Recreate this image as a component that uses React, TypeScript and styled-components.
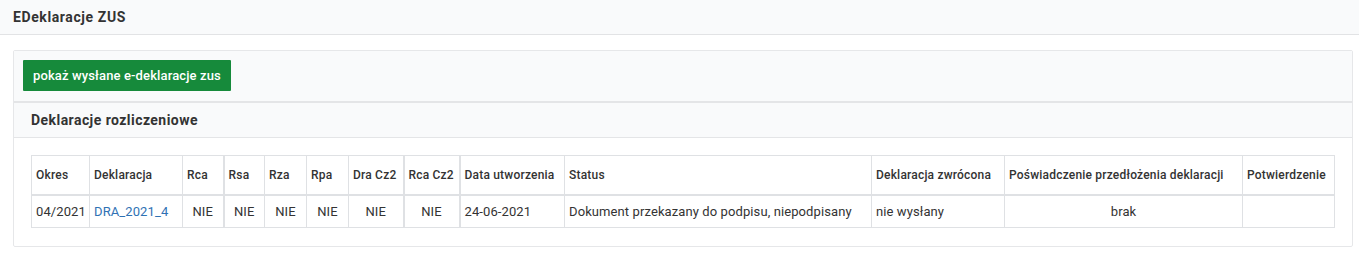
import React from "react";
import styled, { createGlobalStyle } from "styled-components";

const GlobalStyle = createGlobalStyle`
  body {
    margin: 0;
    background: #ffffff;
    font-family: Roboto, "Liberation Sans", Arial, sans-serif;
    color: #333333;
  }
`;

const TopBar = styled.div`
  height: 34px;
  display: flex;
  align-items: center;
  padding: 0 13px;
  background: #f9fafb;
  border-bottom: 1px solid #e2e3e5;
`;

const PageTitle = styled.h1`
  margin: 0;
  font-size: 14px;
  font-weight: 700;
  letter-spacing: 0.6px;
  color: #333333;
`;

const Panel = styled.div`
  margin: 15px 6px 0 13px;
  border: 1px solid #e6e7e9;
  border-radius: 2px;
`;

const Toolbar = styled.div`
  display: flex;
  align-items: center;
  padding: 9px 9px 10px 9px;
  background: #f9fafb;
  border-bottom: 1px solid #e4e5e7;
`;

const GreenButton = styled.button`
  height: 31px;
  padding: 0 10px;
  border: none;
  border-radius: 1px;
  background: #168a3b;
  color: #ffffff;
  font-family: Roboto, "Liberation Sans", Arial, sans-serif;
  font-size: 13px;
  font-weight: 500;
  letter-spacing: 0.13px;
  cursor: pointer;
`;

const SectionHeader = styled.div`
  height: 34px;
  display: flex;
  align-items: center;
  padding: 0 17px;
  background: #f9fafb;
  border-top: 1px solid #e4e5e7;
  border-bottom: 1px solid #e4e5e7;
`;

const SectionTitle = styled.h2`
  margin: 0;
  font-size: 14px;
  font-weight: 700;
  letter-spacing: 0.45px;
  color: #333333;
`;

const SectionBody = styled.div`
  padding: 17px 18px 18px 17px;
`;

const Table = styled.table`
  width: 1303px;
  border-collapse: collapse;
  table-layout: fixed;
  font-size: 12px;
`;

const HeadCell = styled.th<{ $thick?: boolean }>`
  height: 38px;
  padding: 0 4px;
  text-align: left;
  font-weight: 500;
  letter-spacing: 0.2px;
  color: #333333;
  white-space: nowrap;
  border: 1px solid #dfe1e4;
  border-left-width: ${(p) => (p.$thick ? "2px" : "1px")};
  border-bottom: 2px solid #dfe1e4;
`;

const Cell = styled.td<{ $center?: boolean; $thick?: boolean }>`
  height: 31px;
  padding: 0 4px;
  text-align: ${(p) => (p.$center ? "center" : "left")};
  color: #333333;
  white-space: nowrap;
  font-size: 13px;
  letter-spacing: 0.1px;
  border: 1px solid #dfe1e4;
  border-left-width: ${(p) => (p.$thick ? "2px" : "1px")};
`;

const DocLink = styled.a`
  color: #2f72b4;
  text-decoration: none;
`;

type Column = { title: string; width: number; thick?: boolean };

const columns: Column[] = [
  { title: "Okres", width: 58 },
  { title: "Deklaracja", width: 93 },
  { title: "Rca", width: 41 },
  { title: "Rsa", width: 41, thick: true },
  { title: "Rza", width: 42 },
  { title: "Rpa", width: 42 },
  { title: "Dra Cz2", width: 55 },
  { title: "Rca Cz2", width: 56, thick: true },
  { title: "Data utworzenia", width: 105, thick: true },
  { title: "Status", width: 307 },
  { title: "Deklaracja zwrócona", width: 133 },
  { title: "Poświadczenie przedłożenia deklaracji", width: 238 },
  { title: "Potwierdzenie", width: 92 },
];

export default function App() {
  return (
    <>
      <GlobalStyle />
      <TopBar>
        <PageTitle>EDeklaracje ZUS</PageTitle>
      </TopBar>
      <Panel>
        <Toolbar>
          <GreenButton>pokaż wysłane e-deklaracje zus</GreenButton>
        </Toolbar>
        <SectionHeader>
          <SectionTitle>Deklaracje rozliczeniowe</SectionTitle>
        </SectionHeader>
        <SectionBody>
          <Table>
            <colgroup>
              {columns.map((c) => (
                <col key={c.title} style={{ width: c.width }} />
              ))}
            </colgroup>
            <thead>
              <tr>
                {columns.map((c) => (
                  <HeadCell key={c.title} $thick={c.thick}>
                    {c.title}
                  </HeadCell>
                ))}
              </tr>
            </thead>
            <tbody>
              <tr>
                <Cell>04/2021</Cell>
                <Cell>
                  <DocLink href="#">DRA_2021_4</DocLink>
                </Cell>
                <Cell $center>NIE</Cell>
                <Cell $center $thick>NIE</Cell>
                <Cell $center>NIE</Cell>
                <Cell $center>NIE</Cell>
                <Cell $center>NIE</Cell>
                <Cell $center $thick>NIE</Cell>
                <Cell $thick>24-06-2021</Cell>
                <Cell>Dokument przekazany do podpisu, niepodpisany</Cell>
                <Cell>nie wysłany</Cell>
                <Cell $center>brak</Cell>
                <Cell></Cell>
              </tr>
            </tbody>
          </Table>
        </SectionBody>
      </Panel>
    </>
  );
}
